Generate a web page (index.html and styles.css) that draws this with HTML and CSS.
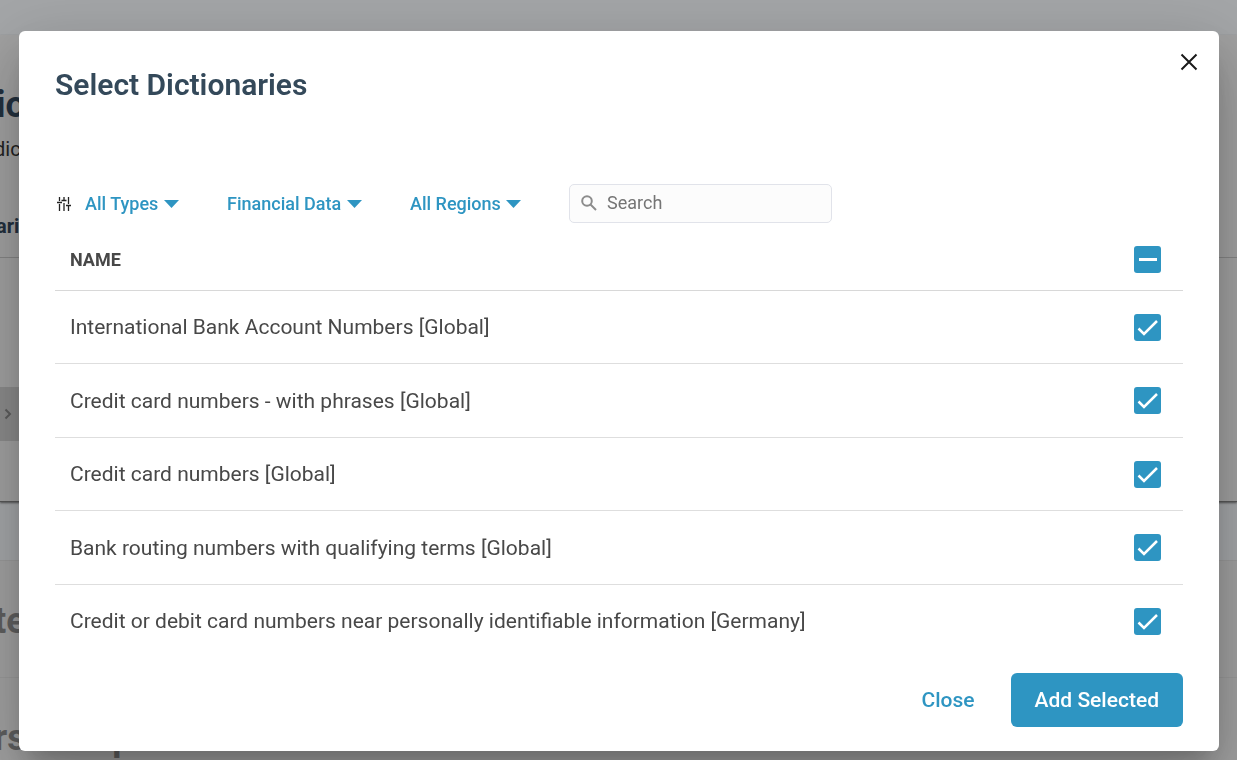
FILE: index.html
```html
<!DOCTYPE html>
<html lang="en">
<head>
<meta charset="utf-8">
<meta name="viewport" content="width=device-width, initial-scale=1">
<title>Select Dictionaries</title>
<link rel="stylesheet" href="styles.css">
</head>
<body>
<main class="page" aria-hidden="true">
  <section class="panel">
    <div class="panel-head">
      <h1 class="panel-title">io</h1>
      <p class="panel-note">dic</p>
      <p class="panel-tab">ari</p>
    </div>
    <div class="pager"><svg width="8" height="12" viewBox="0 0 8 12"><path d="M1.5 1.5 6 6 1.5 10.5"/></svg></div>
  </section>
  <section class="group">
    <h2 class="group-title">te</h2>
    <h2 class="group-title">rs Group</h2>
  </section>
</main>

<div class="overlay">
  <div class="dialog" role="dialog" aria-modal="true" aria-labelledby="dialog-title">
    <button class="dismiss" type="button" aria-label="Dismiss"><svg width="18" height="18" viewBox="0 0 18 18"><path d="M1.5 1.5 16.5 16.5M16.5 1.5 1.5 16.5"/></svg></button>
    <h2 class="title" id="dialog-title">Select Dictionaries</h2>

    <div class="filters">
      <svg class="tune" width="14" height="14" viewBox="0 0 14 14" aria-hidden="true"><path d="M2.5 0v4M0 5.500h5M2.500 7v7M7 0v4M4.500 3.500h5M7 6v8M11.500 0v7M9 8.500h5M11.500 8.500v5.500"/></svg>
      <span class="filter"><select aria-label="Type"><option>All Types</option></select><svg width="15" height="8" viewBox="0 0 15 8"><path d="M0 0h15L7.500 8z"/></svg></span>
      <span class="filter"><select aria-label="Category"><option>Financial Data</option></select><svg width="15" height="8" viewBox="0 0 15 8"><path d="M0 0h15L7.500 8z"/></svg></span>
      <span class="filter"><select aria-label="Region"><option>All Regions</option></select><svg width="15" height="8" viewBox="0 0 15 8"><path d="M0 0h15L7.500 8z"/></svg></span>
      <label class="search"><svg width="16" height="16" viewBox="0 0 16 16"><circle cx="6" cy="6" r="4.800"/><path d="M9.500 9.500 15 15"/></svg><input type="search" placeholder="Search" aria-label="Search"></label>
    </div>

    <div class="list">
      <table class="table">
        <thead>
          <tr><th scope="col">NAME</th><th class="pick"><input class="check partial" type="checkbox" aria-label="Select all"></th></tr>
        </thead>
        <tbody>
          <tr><td><label for="d1">International Bank Account Numbers [Global]</label></td><td class="pick"><input class="check" type="checkbox" id="d1" checked></td></tr>
          <tr><td><label for="d2">Credit card numbers - with phrases [Global]</label></td><td class="pick"><input class="check" type="checkbox" id="d2" checked></td></tr>
          <tr><td><label for="d3">Credit card numbers [Global]</label></td><td class="pick"><input class="check" type="checkbox" id="d3" checked></td></tr>
          <tr><td><label for="d4">Bank routing numbers with qualifying terms [Global]</label></td><td class="pick"><input class="check" type="checkbox" id="d4" checked></td></tr>
          <tr><td><label for="d5">Credit or debit card numbers near personally identifiable information [Germany]</label></td><td class="pick"><input class="check" type="checkbox" id="d5" checked></td></tr>
        </tbody>
      </table>
    </div>

    <div class="actions">
      <button class="btn" type="button">Close</button>
      <button class="btn primary" type="button">Add Selected</button>
    </div>
  </div>
</div>
</body>
</html>
```

FILE: styles.css
```css
* { box-sizing: border-box; }

body {
  margin: 0;
  height: 100vh;
  overflow: hidden;
  background: #f2f5f8;
  color: #484848;
  font-family: Roboto, "Liberation Sans", sans-serif;
}

h1, h2, p { margin: 0; }
svg { display: block; flex: none; }
button, input, select { font: inherit; }

.page { padding-top: 35px; }

.panel {
  padding-bottom: 60px;
  background: #ededed;
  border-bottom: 1px solid #808080;
  box-shadow: 0 1px 2px rgba(0, 0, 0, .5);
}

.panel-head {
  height: 223px;
  padding-top: 49px;
  border-bottom: 1px solid #c4c4c4;
  color: #33475b;
  text-indent: -4px;
}

.panel-title { font-size: 36px; line-height: 42px; font-weight: 700; }
.panel-note { padding-top: 10px; font-size: 20px; line-height: 26px; color: #333; text-indent: -6px; }
.panel-tab { padding-top: 50px; font-size: 20px; line-height: 28px; font-weight: 700; }

.pager {
  display: flex;
  align-items: center;
  width: 60px;
  height: 54px;
  margin-top: 129px;
  padding-left: 4px;
  background: #cdcdcd;
}

.pager path { fill: none; stroke: #888; stroke-width: 2; }

.group { margin-top: 58px; background: #ededed; }

.group-title {
  height: 117px;
  padding-top: 39px;
  border-top: 1px solid #e2e2e2;
  color: #8c8c8c;
  font-size: 36px;
  line-height: 42px;
  font-weight: 700;
  text-indent: -6px;
}

.overlay {
  position: fixed;
  inset: 0;
  display: flex;
  padding: 31px 18px 9px 19px;
  background: rgba(0, 0, 0, .32);
}

.dialog {
  position: relative;
  flex: 1;
  min-width: 0;
  display: flex;
  flex-direction: column;
  padding: 32px 36px 24px;
  background: #fff;
  border-radius: 6px;
  box-shadow: 0 16px 22px -10px rgba(0, 0, 0, .2), 0 36px 57px 4px rgba(0, 0, 0, .14), 0 14px 69px 12px rgba(0, 0, 0, .12);
}

.dismiss {
  position: absolute;
  top: 14px;
  right: 13px;
  padding: 8px;
  border: 0;
  background: none;
}

.dismiss path { fill: none; stroke: #1a1a1a; stroke-width: 2; }

.title { font-size: 30px; line-height: 44px; font-weight: 600; color: #34495a; }

.filters { display: flex; align-items: center; margin-top: 77px; padding-left: 2px; }
.tune { margin-right: 14px; }
.tune path { fill: none; stroke: #222; stroke-width: 1.3; }

.filter {
  display: flex;
  align-items: center;
  gap: 5px;
  margin-right: 48px;
  color: #2e95c2;
}

.filter select {
  appearance: none;
  margin: 0;
  padding: 0;
  border: 0;
  background: none;
  color: inherit;
  font-size: 18px;
  line-height: 24px;
  font-weight: 500;
}

.filter path { fill: currentColor; }

.search {
  display: flex;
  align-items: center;
  gap: 10px;
  width: 263px;
  height: 39px;
  padding: 0 11px 2px;
  background: #fcfcfc;
  border: 1px solid #e1e3ea;
  border-radius: 5px;
}

.search circle, .search path { fill: none; stroke: #8c8c8c; stroke-width: 2; }

.search input {
  flex: 1;
  min-width: 0;
  padding: 0;
  border: 0;
  outline: 0;
  background: none;
  font-size: 18px;
  line-height: 24px;
}

.search input::placeholder { color: #757575; }

.list { flex: 1; min-height: 0; overflow: hidden; }

.table { width: 100%; border-collapse: separate; border-spacing: 0; }

.table th, .table td {
  height: 73px;
  padding: 0 15px;
  border-bottom: 1px solid #dedede;
  text-align: left;
  font-size: 21px;
  line-height: 28px;
}

.table tr:nth-child(even) td { height: 74px; }
.table thead th { height: 68px; padding-top: 6px; border-bottom-color: #d8d8d8; font-size: 18px; font-weight: 700; }
.table tr:last-child td { border-bottom-color: transparent; }
.table .pick { width: 71px; padding-left: 22px; padding-right: 22px; }

.check {
  appearance: none;
  display: block;
  width: 27px;
  height: 27px;
  margin: 0;
  border-radius: 3px;
  background: #2e95c2 url("data:image/svg+xml,%3Csvg xmlns='http://www.w3.org/2000/svg' viewBox='0 0 27 27'%3E%3Cpath d='M4.500 14.500 10 20 23 7' fill='none' stroke='white' stroke-width='2.500'/%3E%3C/svg%3E");
}

.check.partial {
  background-image: url("data:image/svg+xml,%3Csvg xmlns='http://www.w3.org/2000/svg' viewBox='0 0 27 27'%3E%3Cpath d='M5 13.500h18' stroke='white' stroke-width='3'/%3E%3C/svg%3E");
}

.actions { display: flex; justify-content: flex-end; gap: 12px; padding-top: 16px; }

.btn {
  height: 54px;
  padding: 0 24px;
  border: 0;
  border-radius: 6px;
  background: none;
  color: #2e95c2;
  font-size: 21px;
  line-height: 28px;
  font-weight: 500;
}

.btn.primary { background: #2e95c2; color: #fff; }
```
